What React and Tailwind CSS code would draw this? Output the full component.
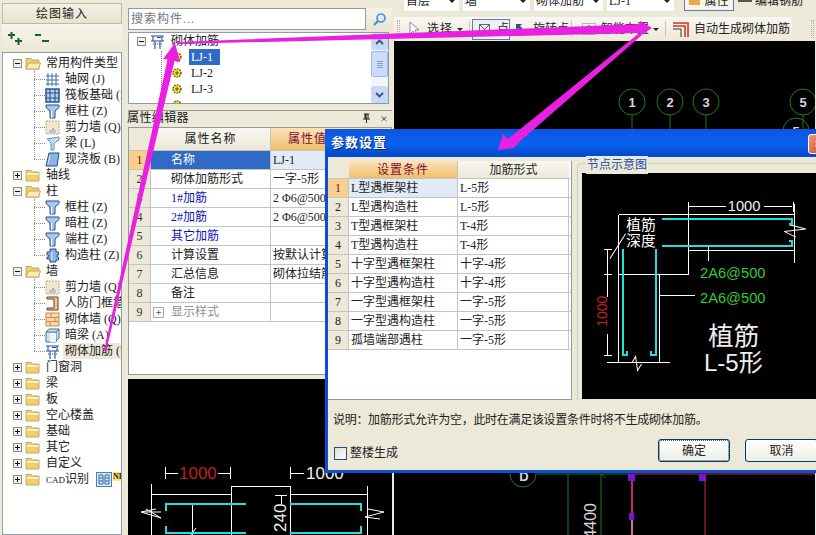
import React from 'react';

const FONT = "font-['Liberation_Serif','Noto_Sans_CJK_SC',serif]";

/* ---------- tree icons ---------- */
function Expander({ open }) {
  return (
    <svg width="9" height="9" viewBox="0 0 9 9" className="shrink-0">
      <rect x="0.5" y="0.5" width="8" height="8" fill="#f1efe6" stroke="#8d8d86" />
      <path d="M2 4.5h5" stroke="#111" />
      {!open && <path d="M4.5 2v5" stroke="#111" />}
    </svg>
  );
}

function Folder({ open }) {
  return (
    <svg width="16" height="13" viewBox="0 0 16 13" className="shrink-0">
      <path d="M1 3V1.5h5l1 1.5h7v9H1z" fill="#f3cf6c" stroke="#b59a52" strokeWidth="0.8" />
      {open ? (
        <path d="M1 12l2.5-6h12L13.5 12z" fill="#fbe9b4" stroke="#b59a52" strokeWidth="0.8" />
      ) : (
        <rect x="1.5" y="4" width="12" height="2" fill="#fdf0c4" />
      )}
    </svg>
  );
}

const Ico = ({ children }) => (
  <svg width="15" height="15" viewBox="0 0 15 15" className="shrink-0">
    {children}
  </svg>
);

const GridIco = () => (
  <Ico>
    <path d="M3 1v13M7 1v13M11 1v13M1 4h13M1 8h13M1 12h13" stroke="#3f6cb0" strokeWidth="1" />
  </Ico>
);
const RaftIco = () => (
  <Ico>
    <rect x="1" y="1" width="13" height="13" fill="#b8cdea" stroke="#1d4b92" strokeWidth="1.4" />
    <path d="M5 1v13M10 1v13M1 5h13M1 10h13" stroke="#1d4b92" />
  </Ico>
);
const ColumnIco = () => (
  <Ico>
    <path d="M1 1h13v2.5L10 7v7H5V7L1 3.5z" fill="#a9c6ea" stroke="#1f4f96" />
    <path d="M6.5 7v7" stroke="#fff" />
  </Ico>
);
const ShearIco = () => (
  <Ico>
    <rect x="1" y="1" width="13" height="13" fill="#f1e6d2" stroke="#c9a678" strokeDasharray="2 1" />
    <path d="M4 11l1-1 1 1 2-3 1 2 2 1" stroke="#9aa7b5" fill="none" />
    <rect x="4" y="10" width="7" height="3" fill="#b9c3cd" />
  </Ico>
);
const BeamIco = () => (
  <Ico>
    <path d="M2 3l12-2v3l-5 3v7H6V7z" fill="#c0dcef" stroke="#5f92bf" />
    <path d="M8 7l5-5" stroke="#fff" />
  </Ico>
);
const SlabIco = () => (
  <Ico>
    <path d="M4 1h10l-2 13H1z" fill="#8fb3e0" stroke="#1f4f96" />
    <path d="M5 3l-2 9" stroke="#d9e6f6" />
  </Ico>
);
const ConstructIco = () => (
  <Ico>
    <path d="M5 1h6v3h2.5v3H12v2h1.5v3H11v2H5v-3H2V9h2V7H2V4h3z" fill="#8fb3e0" stroke="#1f4f96" />
    <path d="M7 4v8" stroke="#e3edf9" />
  </Ico>
);
const DoorIco = () => (
  <Ico>
    <path d="M2 1h11v13H2v-2h7V3H2z" fill="#f0c89a" stroke="#6a3d17" />
  </Ico>
);
const BrickIco = () => (
  <Ico>
    <rect x="1" y="1" width="13" height="13" fill="#f7d6ac" stroke="#d08b4c" />
    <path d="M1 5.5h13M1 9.5h13M6 1v4.5M10 5.5v4M5 9.5V14" stroke="#d08b4c" />
  </Ico>
);
const HiddenIco = () => (
  <Ico>
    <path d="M1 4l3-3h10v9l-3 3v1H1z" fill="#cfe2f2" stroke="#3f6f9f" />
    <path d="M1 4h10v10M11 4l3-3" stroke="#3f6f9f" fill="none" />
    <rect x="5" y="5" width="6" height="9" fill="#eef5fb" />
  </Ico>
);
const RebarIco = () => (
  <Ico>
    <path d="M1 2h13M1 7h13M3 2v5M5 7v8M10 7v8M12 2v5M7 3.5h4" stroke="#24509a" strokeWidth="1.1" fill="none" />
    <path d="M3 10h9" stroke="#24509a" strokeDasharray="1 1" />
  </Ico>
);

function Gear() {
  return (
    <svg width="10" height="10" viewBox="0 0 10 10" className="shrink-0">
      <circle cx="5" cy="5" r="4.5" fill="#f4e23c" />
      <circle cx="5" cy="5" r="4" fill="none" stroke="#3a3a10" strokeWidth="1.2" strokeDasharray="1.4 1.2" />
      <path d="M3 5h4M5 3v4" stroke="#3a3a10" strokeWidth="0.8" />
    </svg>
  );
}

/* ---------- left tree data ---------- */
const TREE = [
  { label: '常用构件类型', open: true, kids: [
    { icon: GridIco, label: '轴网 (J)' },
    { icon: RaftIco, label: '筏板基础 (M)' },
    { icon: ColumnIco, label: '框柱 (Z)' },
    { icon: ShearIco, label: '剪力墙 (Q)' },
    { icon: BeamIco, label: '梁 (L)' },
    { icon: SlabIco, label: '现浇板 (B)' },
  ] },
  { label: '轴线' },
  { label: '柱', open: true, kids: [
    { icon: ColumnIco, label: '框柱 (Z)' },
    { icon: ColumnIco, label: '暗柱 (Z)' },
    { icon: ColumnIco, label: '端柱 (Z)' },
    { icon: ConstructIco, label: '构造柱 (Z)' },
  ] },
  { label: '墙', open: true, kids: [
    { icon: ShearIco, label: '剪力墙 (Q)' },
    { icon: DoorIco, label: '人防门框墙 (RF)' },
    { icon: BrickIco, label: '砌体墙 (Q)' },
    { icon: HiddenIco, label: '暗梁 (A)' },
    { icon: RebarIco, label: '砌体加筋 (Y)', active: true },
  ] },
  { label: '门窗洞' },
  { label: '梁' },
  { label: '板' },
  { label: '空心楼盖' },
  { label: '基础' },
  { label: '其它' },
  { label: '自定义' },
  { label: '识别', cad: true },
];

function LeftTree() {
  return (
    <div className="flex-1 overflow-hidden border border-[#8f9aa5] bg-white pt-[2px] text-[12px] leading-4 text-[#222]">
      {TREE.map((g) => (
        <div key={g.label}>
          <div className="flex h-4 items-center pl-[10px] whitespace-nowrap">
            <Expander open={g.open} />
            <span className="ml-[3px]"><Folder open={g.open} /></span>
            <span className="ml-[5px]">
              {g.cad && <span className="text-[9px]">CAD</span>}
              {g.label}
            </span>
            {g.cad && (
              <>
                <svg width="16" height="15" viewBox="0 0 16 15" className="ml-[7px] shrink-0">
                  <rect x="0.5" y="0.5" width="15" height="14" fill="#dce9f8" stroke="#4a7fc0" />
                  <path d="M3 3h4v9H3zM9 3h4v9H9zM3 6h4M9 6h4M3 9h4M9 9h4" fill="none" stroke="#3569ad" />
                </svg>
                <span className="ml-[1px] mt-[1px] self-start bg-[#ffe96a] text-[8px] leading-[9px] font-bold">NE</span>
              </>
            )}
          </div>
          {g.kids && (
            <div className="relative">
              <div className="absolute left-[31px] top-0 bottom-[8px] border-l border-dotted border-[#8a8a8a]" />
              {g.kids.map((k) => (
                <div key={k.label} className="flex h-4 items-center pl-[31px] whitespace-nowrap">
                  <span className="w-[11px] shrink-0 border-t border-dotted border-[#8a8a8a]" />
                  <k.icon />
                  <span className={`ml-[3px] flex-1 px-[2px] ${k.active ? 'bg-[#ece9d8]' : ''}`}>{k.label}</span>
                </div>
              ))}
            </div>
          )}
        </div>
      ))}
    </div>
  );
}

/* ---------- property grid ---------- */
const PROPS = [
  { name: '名称', value: 'LJ-1', selected: true },
  { name: '砌体加筋形式', value: '一字-5形' },
  { name: '1#加筋', value: '2 Φ6@500', blue: true },
  { name: '2#加筋', value: '2 Φ6@500', blue: true },
  { name: '其它加筋', value: '', blue: true },
  { name: '计算设置', value: '按默认计算设置计算' },
  { name: '汇总信息', value: '砌体拉结筋' },
  { name: '备注', value: '' },
  { name: '显示样式', value: '', gray: true, plus: true },
];

function PropertyGrid() {
  return (
    <div className="h-[248px] overflow-hidden border border-[#9a9a94] bg-white text-[12px]">
      <div className="flex h-[23px] border-b border-[#c4c4c0]">
        <div className="w-[22px] bg-[#ece9d8]" />
        <div className="flex w-[120px] items-center justify-center border-r border-[#c4c4c0] bg-gradient-to-b from-[#f8f7f1] to-[#ece9d8] tracking-[1px] text-[#222]">属性名称</div>
        <div className="flex flex-1 items-center overflow-hidden bg-gradient-to-b from-[#fae3b8] to-[#f2bd6c] pl-[17px] tracking-[1px] whitespace-nowrap text-[#7b0f2c]">属性值</div>
      </div>
      {PROPS.map((p, i) => (
        <div key={p.name} className="flex h-[19px] items-center border-b border-[#c4c4c0]">
          <div className={`flex h-full w-[22px] items-center justify-center border-r border-[#c4c4c0] ${p.selected ? 'bg-[#f9cf8c] text-[#7b0f2c]' : 'bg-[#ece9d8] text-[#333]'}`}>{i + 1}</div>
          <div className={`flex h-full w-[120px] items-center border-r border-[#c4c4c0] ${p.plus ? 'pl-[2px]' : 'pl-[20px]'} ${p.selected ? 'bg-[#316ac5] text-white' : p.blue ? 'text-[#0a10b8]' : p.gray ? 'text-[#909090]' : 'text-[#222]'}`}>
            {p.plus && (
              <span className="mr-[7px] flex h-[11px] w-[11px] items-center justify-center border border-[#aaa] text-[11px] leading-none text-black">+</span>
            )}
            {p.name}
          </div>
          {/* the dialog sits on top of this column from x=325 on */}
          <div className={`flex h-full flex-1 items-center pl-[2px] text-[#222] ${p.selected ? 'bg-[#e1eaf7]' : ''}`}>
            <span className="w-[52px] overflow-hidden whitespace-nowrap">{p.value}</span>
          </div>
        </div>
      ))}
    </div>
  );
}

/* ---------- dialog ---------- */
const RULES = [
  ['L型遇框架柱', 'L-5形'],
  ['L型遇构造柱', 'L-5形'],
  ['T型遇框架柱', 'T-4形'],
  ['T型遇构造柱', 'T-4形'],
  ['十字型遇框架柱', '十字-4形'],
  ['十字型遇构造柱', '十字-4形'],
  ['一字型遇框架柱', '一字-5形'],
  ['一字型遇构造柱', '一字-5形'],
  ['孤墙端部遇柱', '一字-5形'],
];

function NodeDrawing() {
  // coordinates follow a 3x scale of the page
  return (
    <svg viewBox="20 128 703 677" className="h-[226px] w-[235px] bg-black" shapeRendering="crispEdges">
      <g stroke="#fff" strokeWidth="3" fill="none">
        <path d="M130 253H655M655 220V398M340 360H655M340 215V433M130 253V697M130 433H340M253 433V697M95 697H282" />
        <path d="M340 228H450M565 228H650M340 215V245M652 215V245" />
        <path d="M95 357V500M95 610V675M85 357H108M85 433H108M85 675H108" />
        <path d="M253 495H358M398 350V392" />
      </g>
      <g stroke="#fff" strokeWidth="3" fill="none" shapeRendering="auto">
        <path d="M150 310L103 385M625 303L690 296L640 283M625 303L660 320M170 695L180 678L186 720L198 700" />
      </g>
      <g stroke="#22dede" strokeWidth="6" fill="none">
        <path d="M258 267H650V280H640M258 347H650V333H640" />
        <path d="M141 357V672H155V662M240 357V672H226V662" />
      </g>
      <g fontFamily="Liberation Sans, Noto Sans CJK SC, sans-serif">
        <text x="505" y="242" fill="#f2f2f2" fontSize="44" textAnchor="middle">1000</text>
        <text x="108" y="555" fill="#c01f1f" fontSize="42" textAnchor="middle" transform="rotate(-90 95 555)">1000</text>
        <text x="152" y="300" fill="#fff" fontSize="44">植筋</text>
        <text x="152" y="347" fill="#fff" fontSize="44">深度</text>
        <text x="373" y="443" fill="#35c935" fontSize="44">2A6@500</text>
        <text x="373" y="517" fill="#35c935" fontSize="44">2A6@500</text>
        <text x="398" y="642" fill="#eee" fontSize="76">植筋</text>
        <text x="385" y="720" fill="#eee" fontSize="72">L-5形</text>
      </g>
    </svg>
  );
}

function Dialog() {
  return (
    <div className={`absolute left-[325px] top-[129px] flex h-[344px] w-[510px] flex-col border-x-[3px] border-b-[3px] border-[#0a4fd6] bg-[#ece9d8] text-[12px] text-[#222] ${FONT}`}>
      <div className="-mx-[3px] flex h-[28px] shrink-0 items-center bg-gradient-to-b from-[#0a56e0] via-[#0b62f0] to-[#0448c8] pl-[6px] whitespace-nowrap">
        <span className="w-[56px] shrink-0 text-[13px] font-bold tracking-[1px] text-white [text-shadow:1px_1px_0_#0a2a70]">参数设置</span>
        <span className="ml-[421px] mt-[1px] flex h-[20px] w-[20px] shrink-0 items-center justify-center rounded-[3px] border border-white bg-gradient-to-br from-[#f09a7c] to-[#c6401c] text-[13px] font-bold text-white">×</span>
      </div>
      <div className="flex h-[243px] shrink-0 pt-[4px]">
        <div className="h-[239px] w-[244px] shrink-0 border-r border-b border-[#8f9aa5] bg-white">
          <div className="flex h-[18px] border-b border-[#c4c4c0]">
            <div className="w-[21px] bg-[#ece9d8]" />
            <div className="flex w-[109px] items-center justify-center border-r border-[#c4c4c0] bg-gradient-to-b from-[#fae3b8] to-[#f2bd6c] tracking-[1px] text-[#7b0f2c]">设置条件</div>
            <div className="flex w-[111px] items-center justify-center bg-gradient-to-b from-[#f8f7f1] to-[#ece9d8]">加筋形式</div>
          </div>
          {RULES.map(([cond, form], i) => (
            <div key={cond} className="flex h-[19px] border-b border-[#c4c4c0]">
              <div className={`flex w-[21px] items-center justify-center border-r border-[#c4c4c0] ${i === 0 ? 'bg-[#f9cf8c] text-[#7b0f2c]' : 'bg-[#ece9d8]'}`}>{i + 1}</div>
              <div className={`flex w-[109px] items-center border-r border-[#c4c4c0] pl-[2px] ${i === 0 ? 'bg-[#e1eaf7]' : ''}`}>{cond}</div>
              <div className="flex w-[111px] items-center border-r border-[#c4c4c0] pl-[2px]">{form}</div>
            </div>
          ))}
        </div>
        <div className="relative ml-[5px] mt-[2px] flex-1 rounded-tl-[4px] border-l border-t border-[#d0d0bf] pt-[9px] pl-[4px]">
          <span className="absolute -top-[8px] left-[8px] bg-[#ece9d8] px-[1px] text-[#1b4ea8]">节点示意图</span>
          <NodeDrawing />
        </div>
      </div>
      <div className="mt-[12px] h-[16px] shrink-0 pl-[5px] leading-4 tracking-[-0.3px] whitespace-nowrap">
        说明：加筋形式允许为空，此时在满足该设置条件时将不生成砌体加筋。
      </div>
      <div className="relative flex-1">
        <div className="absolute left-[6px] top-[16px] flex items-center">
          <span className="h-[13px] w-[13px] border border-[#1c5180] bg-gradient-to-br from-[#dcdcd7] to-white" />
          <span className="ml-[3px]">整楼生成</span>
        </div>
        <div className="absolute left-[330px] top-[11px] flex gap-[15px]">
          <button className="flex h-[23px] w-[72px] items-center justify-center rounded-[3px] border border-[#003c74] bg-gradient-to-b from-white to-[#eeeee4] outline-1 -outline-offset-2 outline-dotted outline-[#555]">确定</button>
          <button className="flex h-[23px] w-[73px] items-center justify-center rounded-[3px] border border-[#003c74] bg-gradient-to-b from-white to-[#eeeee4]">取消</button>
        </div>
      </div>
    </div>
  );
}

/* ---------- toolbar bits ---------- */
const Combo = ({ w, label }) => (
  <div className="flex h-[20px] shrink-0 items-center justify-between bg-white pl-[2px] pr-[3px] text-[12px]" style={{ width: w }}>
    <span className="whitespace-nowrap">{label}</span>
    <span className="h-0 w-0 border-x-[4px] border-t-[4px] border-x-transparent border-t-[#222]" />
  </div>
);

const Caret = () => (
  <span className="mx-[4px] h-0 w-0 border-x-[3px] border-t-[3px] border-x-transparent border-t-[#222]" />
);
const Sep = () => <span className="mx-[2px] h-[16px] w-px bg-[#c9c6b4]" />;
const Grip = () => <span className="block h-[18px] w-[3px] border-x border-dotted border-[#b3b09c]" />;

function TopBars() {
  return (
    <>
      <div className="flex h-[13px] items-end gap-[4px] overflow-hidden bg-[#ece9d8] pb-[2px] pl-[10px] text-[#222]">
        <Combo w={55} label="首层" />
        <Combo w={67} label="墙" />
        <Combo w={69} label="砌体加筋" />
        <Combo w={67} label="LJ-1" />
        <div className="ml-[6px] flex h-[20px] w-[50px] shrink-0 items-center justify-center gap-[4px] border border-[#5b7fb5] bg-[#f6f4ea] text-[12px]">
          <span className="h-[8px] w-[11px] bg-[#e8a94c]" />属性
        </div>
        <div className="flex h-[20px] items-center gap-[3px] text-[12px] whitespace-nowrap">
          <span className="w-[14px] border-t-2 border-[#555]" />编辑钢筋
        </div>
      </div>
      <div className="h-[4px] bg-[#ece9d8]" />
      <div className="flex h-[24px] items-center bg-[#ece9d8] text-[12px] text-[#222]">
        <div className="flex h-full w-[398px] items-center bg-gradient-to-b from-[#f8f7f1] to-[#ece9d8] pl-[3px]">
          <Grip />
          <svg width="14" height="16" viewBox="0 0 14 16" className="ml-[8px]">
            <path d="M2 1v12l3-3 2 5 2-1-2-5h4z" fill="#fff" stroke="#7a8fa8" />
          </svg>
          <span className="ml-[5px] tracking-[1px]">选择</span>
          <Caret />
          <Sep />
          <div className="flex h-[21px] w-[38px] items-center border border-[#5b7fb5] bg-[#eef0f0] pl-[6px]">
            <svg width="11" height="11" viewBox="0 0 11 11">
              <rect x="0.5" y="0.5" width="10" height="10" fill="none" stroke="#4a6a9a" />
              <path d="M1 1l9 9M10 1l-9 9" stroke="#7a3a3a" />
            </svg>
            <span className="ml-[7px]">点</span>
          </div>
          <svg width="16" height="14" viewBox="0 0 16 14" className="ml-[4px]">
            <path d="M2 12V2h6l-2 2 5 5-2 2-5-5-1 2z" fill="#2f4f86" />
            <path d="M12 11h2" stroke="#333" strokeWidth="2" />
          </svg>
          <span className="ml-[3px] whitespace-nowrap">旋转点</span>
          <Sep />
          <svg width="14" height="14" viewBox="0 0 14 14" className="ml-[8px]">
            <rect x="0.5" y="1.5" width="13" height="11" fill="none" stroke="#777" strokeDasharray="1 1" />
            <path d="M7 3v6M4 6h6" stroke="#223" />
          </svg>
          <span className="ml-[5px] whitespace-nowrap">智能布置</span>
          <Caret />
          <Sep />
          <svg width="17" height="16" viewBox="0 0 17 16" className="ml-[4px]">
            <path d="M1 2h15v14M1 5h12v11" fill="none" stroke="#d0342c" strokeWidth="1.6" />
            <path d="M1 8h8v8" fill="none" stroke="#333" />
          </svg>
          <span className="ml-[5px] whitespace-nowrap">自动生成砌体加筋</span>
        </div>
        <span className="ml-auto mr-[2px]"><Grip /></span>
      </div>
    </>
  );
}

/* ---------- canvases ---------- */
function MainCanvas() {
  const axes = [
    { x: 238, y: 61, n: '1' },
    { x: 276, y: 61, n: '2' },
    { x: 312, y: 61, n: '3' },
    { x: 402, y: 90, n: '5' },
    { x: 409, y: 61, n: '5' },
  ];
  return (
    <svg width="421" height="494" viewBox="0 0 421 494" className="block bg-black">
      <g fill="none" stroke="#1f7a1f">
        {axes.map((a) => (
          <g key={`${a.x}`}>
            <circle cx={a.x} cy={a.y} r="13" fill="#000" />
            <path d={`M${a.x} ${a.y + 13}V90`} />
          </g>
        ))}
        <circle cx="129" cy="433" r="13" />
        <path d="M143 433H237M174 433V494M207 433V494M207 433l5 4" />
      </g>
      <g fontFamily="Liberation Sans, sans-serif" fontSize="13" fill="#d8d8d8" textAnchor="middle">
        {axes.map((a) => (
          <text key={`${a.x}`} x={a.x} y={a.y + 5} fontWeight="bold">{a.n}</text>
        ))}
        <text x="130" y="440" fontWeight="bold">D</text>
      </g>
      <text x="0" y="0" fontFamily="Liberation Sans, sans-serif" fontSize="16" fill="#d8d8d8" textAnchor="end" transform="translate(202 462) rotate(-90)">4400</text>
      <path d="M237 433H421M311 433V494" stroke="#d42a2a" fill="none" />
      <path d="M238 433V494" stroke="#d41f72" strokeWidth="2" fill="none" />
      <path d="M238 478V494" stroke="#c8c8c8" fill="none" />
      <g fill="#7a12d8">
        <rect x="234" y="433" width="7" height="7" />
        <rect x="305" y="433" width="7" height="7" />
        <rect x="235" y="472" width="5" height="7" />
      </g>
    </svg>
  );
}

function LowerCanvas() {
  return (
    <svg width="264" height="157" viewBox="129 378 264 157" className="block bg-black">
      <g stroke="#fff" fill="none" shapeRendering="crispEdges">
        <path d="M166 466V478M166 472H179M219 472H231M231 466V478M291 466V478M291 472H305" />
        <path d="M152 483V535M152 493H232M232 485V535M232 485H291M291 485V535M291 493H368M368 485V535M193 503V535" />
      </g>
      <path d="M157 508l-15 3 20 6-15-9M143 511l19 0M369 508l16 3-19 5 15 2M191 535l6-8" stroke="#fff" fill="none" />
      <g stroke="#22dede" strokeWidth="2" fill="none" shapeRendering="crispEdges">
        <path d="M247 503H167V510M247 532H167V525M291 503H362V510M291 532H362V525" />
      </g>
      <g fontFamily="Liberation Sans, sans-serif" fontSize="17">
        <text x="180" y="478" fill="#c01f1f">1000</text>
        <text x="307" y="478" fill="#f2f2f2">1000</text>
        <text x="0" y="0" fill="#f2f2f2" transform="translate(287 531) rotate(-90)">240</text>
      </g>
      <path d="M282 494V503M276 494H288" stroke="#fff" fill="none" shapeRendering="crispEdges" />
    </svg>
  );
}

function Arrows() {
  return (
    <svg width="816" height="535" viewBox="0 0 816 535" className="pointer-events-none absolute left-0 top-0">
      <g fill="#e91fe2">
        <polygon points="175,43 180,62 174.5,61 106,352 104,351 167.5,59.5 163,59" />
        <polygon points="652,28 640,21 640,24 177,42 177,44 640,33 638,37" />
        <polygon points="498,150 503,134 508,139 638,34 642,35 518,143 514,148" />
      </g>
    </svg>
  );
}

export default function App() {
  return (
    <div className={`relative flex h-[535px] w-[816px] overflow-hidden bg-[#ece9d8] text-[12px] text-[#222] ${FONT}`}>
      {/* Left component tree */}
      <div className="flex h-full w-[122px] shrink-0 flex-col pl-[2px] pt-[3px]">
        <div className="flex h-[21px] shrink-0 items-center justify-center border border-[#bdbaa6] bg-gradient-to-b from-[#f3f1e6] to-[#e6e3d0] tracking-[1px]">绘图输入</div>
        <div className="flex h-[28px] shrink-0 items-center gap-[6px] bg-gradient-to-b from-[#f6f4ec] to-[#ece9d8] pl-[5px]">
          <svg width="16" height="14" viewBox="0 0 16 14">
            <path d="M1 4h7M4.5 1v7M8 10h7M11.5 7v7" stroke="#14613a" strokeWidth="2" />
          </svg>
          <svg width="16" height="14" viewBox="0 0 16 14" className="ml-[5px]">
            <path d="M1 4h6M8 10h7" stroke="#14613a" strokeWidth="2" />
          </svg>
        </div>
        <LeftTree />
      </div>

      {/* Middle column */}
      <div className="ml-[6px] flex h-full w-[264px] shrink-0 flex-col pt-[8px]">
        <div className="flex h-[22px] shrink-0">
          <div className="flex w-[238px] items-center border border-[#8f9aa5] bg-white pl-[2px] tracking-[1px] text-[#777]">搜索构件...</div>
          <div className="flex flex-1 items-center justify-center bg-gradient-to-b from-[#f4f2e8] to-[#e9e6d4]">
            <svg width="15" height="15" viewBox="0 0 15 15">
              <circle cx="9" cy="6" r="4" fill="#dbe9f8" stroke="#4a8fd8" strokeWidth="1.6" />
              <path d="M6 9l-4 4" stroke="#4a8fd8" strokeWidth="2.4" />
            </svg>
          </div>
        </div>
        <div className="mt-[2px] flex h-[72px] w-[261px] shrink-0 overflow-hidden border border-[#8f9aa5] bg-white">
          <div className="relative flex-1">
            <div className="absolute left-[32px] top-[18px] bottom-0 border-l border-dotted border-[#8a8a8a]" />
            <div className="flex h-4 items-center pl-[8px]">
              <Expander open />
              <span className="ml-[4px]"><RebarIco /></span>
              <span className="ml-[6px]">砌体加筋</span>
            </div>
            {['LJ-1', 'LJ-2', 'LJ-3', ''].map((n, i) => (
              <div key={i} className="flex h-4 items-center pl-[43px]">
                <Gear />
                <span className={`ml-[7px] w-[31px] pl-[2px] leading-4 ${i === 0 ? 'bg-[#316ac5] text-white' : ''}`}>{n}</span>
              </div>
            ))}
          </div>
          <div className="flex w-[17px] shrink-0 flex-col bg-[#f3f6fb]">
            <span className="flex h-[17px] items-center justify-center rounded-[2px] bg-[#c8d9f8]">
              <svg width="9" height="6" viewBox="0 0 9 6"><path d="M1 5l3.5-3.5L8 5" fill="none" stroke="#33518f" strokeWidth="1.8" /></svg>
            </span>
            <span className="mt-[1px] flex h-[26px] flex-col items-center justify-center gap-px rounded-[2px] border border-[#9db9ee] bg-[#cddbfa]">
              <span className="w-[6px] border-t border-[#8aa0cc]" />
              <span className="w-[6px] border-t border-[#8aa0cc]" />
              <span className="w-[6px] border-t border-[#8aa0cc]" />
              <span className="w-[6px] border-t border-[#8aa0cc]" />
            </span>
            <span className="mt-auto flex h-[17px] items-center justify-center rounded-[2px] bg-[#c8d9f8]">
              <svg width="9" height="6" viewBox="0 0 9 6"><path d="M1 1l3.5 3.5L8 1" fill="none" stroke="#33518f" strokeWidth="1.8" /></svg>
            </span>
          </div>
        </div>
        <div className="mt-[6px] flex h-[15px] shrink-0 items-center border-t border-[#9a9a94] pr-[4px] tracking-[0.4px]">
          <span className="-ml-[1px]">属性编辑器</span>
          <svg width="9" height="11" viewBox="0 0 9 11" className="ml-auto mr-[9px]">
            <path d="M2 1h5M3 1v5M6 1v5M1 6h7M4.5 6v4" stroke="#222" fill="none" />
            <rect x="3" y="1" width="1.6" height="5" fill="#222" />
          </svg>
          <span className="text-[13px] leading-none text-[#444]">×</span>
        </div>
        <div className="mt-[2px]"><PropertyGrid /></div>
        <div className="mt-[4px] flex-1 overflow-hidden"><LowerCanvas /></div>
      </div>

      {/* Right canvas with toolbars */}
      <div className="ml-[2px] flex h-full flex-1 flex-col">
        <TopBars />
        <MainCanvas />
      </div>

      <Dialog />
      <Arrows />
    </div>
  );
}
